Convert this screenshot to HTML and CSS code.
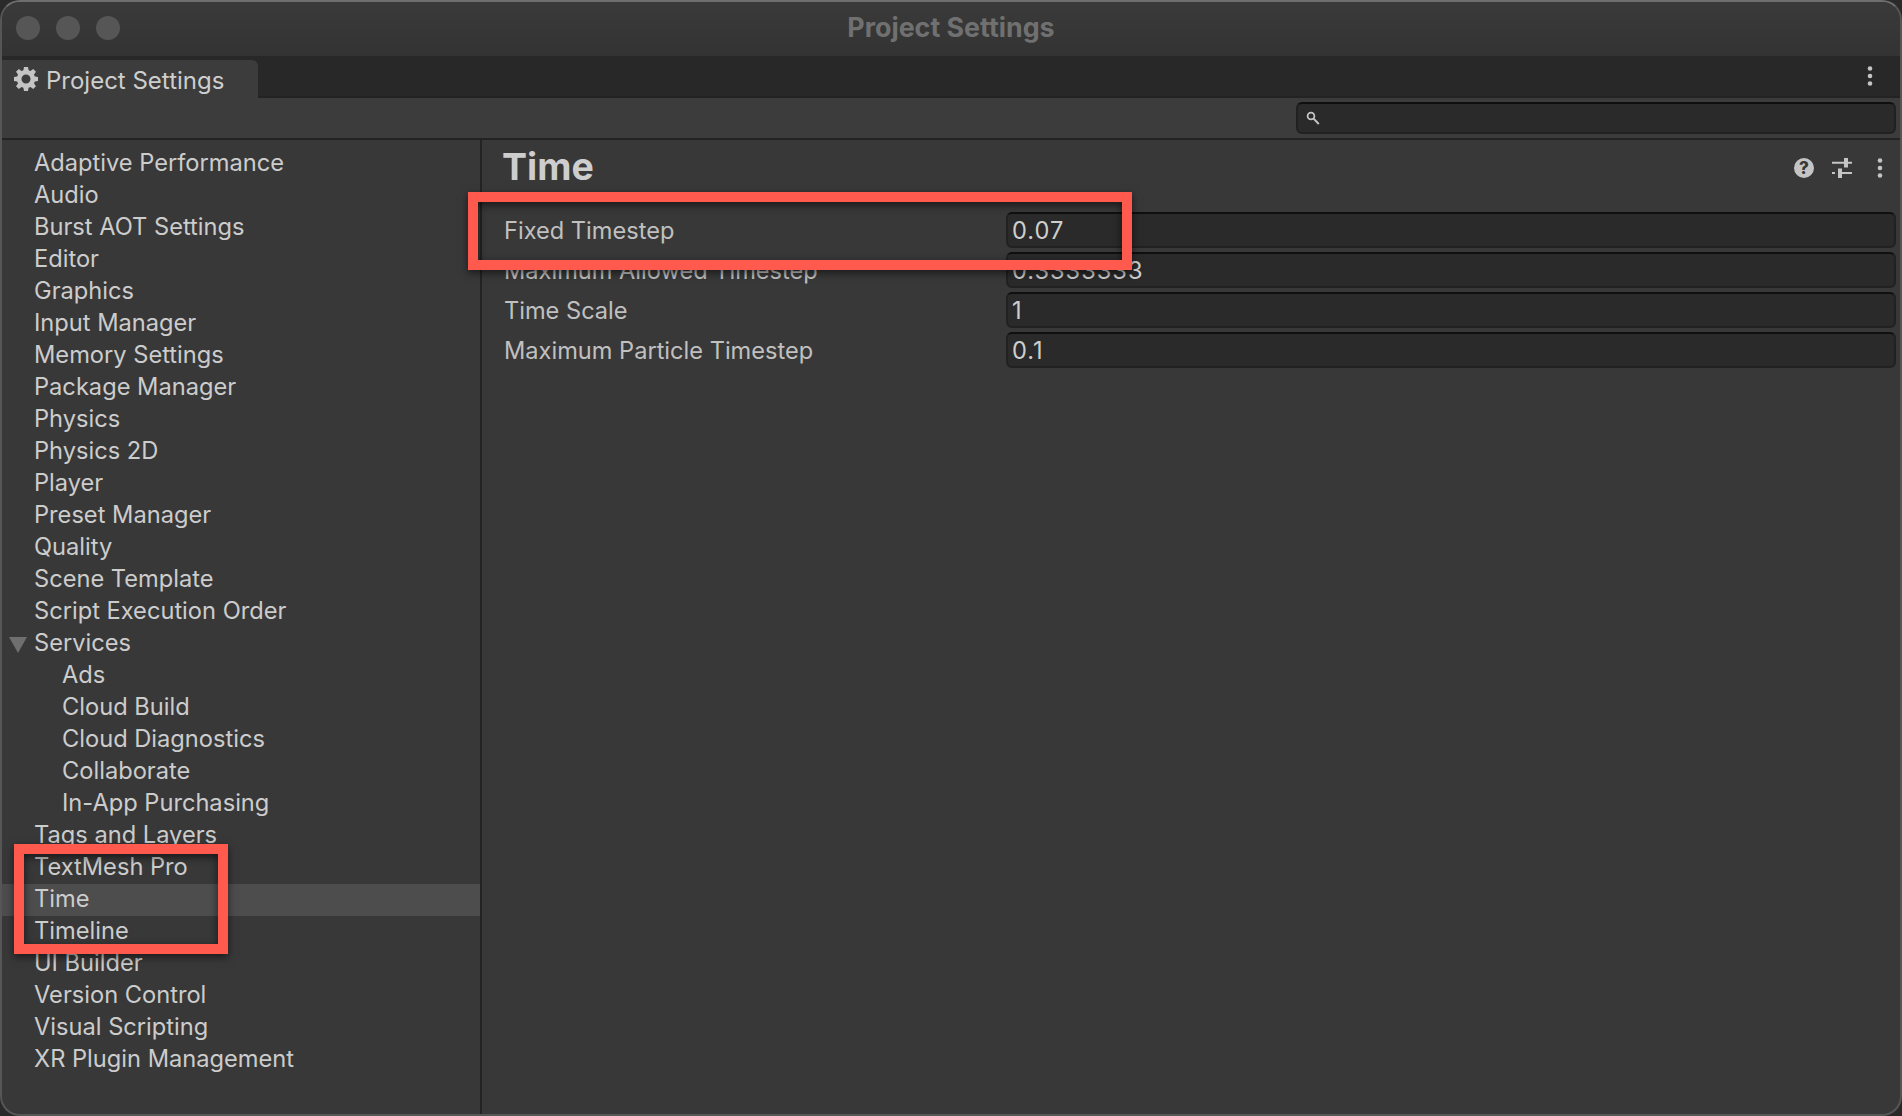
FILE: index.html
```html
<!DOCTYPE html>
<html lang="en">
<head>
<meta charset="utf-8">
<title>Project Settings</title>
<link rel="stylesheet" href="styles.css">
</head>
<body>
<div class="window">
  <header class="titlebar">
    <div class="lights"><span class="light"></span><span class="light"></span><span class="light"></span></div>
    <div class="title">Project Settings</div>
  </header>
  <div class="tabbar">
    <div class="tab">
      <svg class="gear" viewBox="0 0 24 24"><path fill="#c4c4c4" fill-rule="evenodd" d="M10 0h4l.6 3.2 1.9.8L19.2 2l2.8 2.8-2 2.7.8 1.9 3.2.6v4l-3.2.6-.8 1.9 2 2.7-2.8 2.8-2.7-2-1.9.8L14 24h-4l-.6-3.2-1.9-.8-2.7 2L2 19.2l2-2.7-.8-1.9L0 14v-4l3.2-.6.8-1.9-2-2.7L4.8 2l2.7 2 1.9-.8zM12 7.5a4.5 4.5 0 1 0 0 9 4.5 4.5 0 0 0 0-9z"/></svg>
      <span class="tablabel">Project Settings</span>
    </div>
    <svg class="dots tabdots" viewBox="0 0 6 20"><circle cx="3" cy="2.500" r="2.300"/><circle cx="3" cy="10" r="2.300"/><circle cx="3" cy="17.500" r="2.300"/></svg>
  </div>
  <div class="toolbar">
    <div class="search">
      <svg class="searchicon" viewBox="0 0 14 14"><circle cx="5" cy="5" r="3.400" fill="none" stroke="#c4c4c4" stroke-width="1.800"/><path d="M7.600 7.600l5.200 5.400" stroke="#c4c4c4" stroke-width="2" fill="none"/></svg>
    </div>
  </div>
  <main class="body">
    <nav class="sidebar">
      <div class="row">Adaptive Performance</div>
      <div class="row">Audio</div>
      <div class="row">Burst AOT Settings</div>
      <div class="row">Editor</div>
      <div class="row">Graphics</div>
      <div class="row">Input Manager</div>
      <div class="row">Memory Settings</div>
      <div class="row">Package Manager</div>
      <div class="row">Physics</div>
      <div class="row">Physics 2D</div>
      <div class="row">Player</div>
      <div class="row">Preset Manager</div>
      <div class="row">Quality</div>
      <div class="row">Scene Template</div>
      <div class="row">Script Execution Order</div>
      <div class="row"><span class="arrow"></span>Services</div>
      <div class="row sub">Ads</div>
      <div class="row sub">Cloud Build</div>
      <div class="row sub">Cloud Diagnostics</div>
      <div class="row sub">Collaborate</div>
      <div class="row sub">In-App Purchasing</div>
      <div class="row">Tags and Layers</div>
      <div class="row">TextMesh Pro</div>
      <div class="row selected">Time</div>
      <div class="row">Timeline</div>
      <div class="row">UI Builder</div>
      <div class="row">Version Control</div>
      <div class="row">Visual Scripting</div>
      <div class="row">XR Plugin Management</div>
    </nav>
    <section class="content">
      <div class="heading">
        <h1 class="h">Time</h1>
        <div class="tools">
          <svg class="tool" viewBox="0 0 20 20"><circle cx="10" cy="10" r="10" fill="#c4c4c4"/><text x="10" y="16" class="qmark">?</text></svg>
          <svg class="tool" viewBox="0 0 20 20"><path d="M0 4.700h20M0 15h3M8 15h12" stroke="#c4c4c4" stroke-width="2" fill="none"/><path d="M12 0h4v9.500h-4zM6 10.500h4V20H6z" fill="#c4c4c4"/></svg>
          <svg class="dots menu" viewBox="0 0 6 20"><circle cx="3" cy="2.500" r="2.300"/><circle cx="3" cy="10" r="2.300"/><circle cx="3" cy="17.500" r="2.300"/></svg>
        </div>
      </div>
      <div class="field"><label class="lbl">Fixed Timestep</label><div class="input">0.07</div></div>
      <div class="field"><label class="lbl">Maximum Allowed Timestep</label><div class="input">0.3333333</div></div>
      <div class="field"><label class="lbl">Time Scale</label><div class="input">1</div></div>
      <div class="field"><label class="lbl">Maximum Particle Timestep</label><div class="input">0.1</div></div>
    </section>
  </main>
  <div class="mark mark-field"></div>
  <div class="mark mark-nav"></div>
</div>
</body>
</html>
```

FILE: styles.css
```css
* { box-sizing: border-box; }
html, body { margin: 0; padding: 0; height: 100%; background: #2a2a2a; }
body { font-family: Inter, "Liberation Sans", sans-serif; overflow: hidden; }
.window {
  position: relative;
  width: 1902px;
  height: 1116px;
  display: flex;
  flex-direction: column;
  background: #383838;
  border: 2px solid #565656;
  border-top-color: #6e6e6e;
  border-radius: 20px;
  overflow: hidden;
}
.titlebar {
  position: relative;
  flex: 0 0 54px;
  display: flex;
  align-items: center;
  justify-content: center;
  background: linear-gradient(#3a3a3a, #333333);
}
.lights { position: absolute; left: 14px; top: 14px; display: flex; gap: 16px; }
.light { width: 24px; height: 24px; border-radius: 50%; background: #565656; }
.title { font-size: 26.800px; font-weight: 700; color: #707070; margin-top: -5px; }
.tabbar {
  flex: 0 0 42px;
  display: flex;
  justify-content: space-between;
  align-items: flex-start;
  background: #282828;
  box-shadow: inset 0 -2px 0 #232323;
}
.tab {
  width: 256px;
  height: 38px;
  margin-top: 4px;
  display: flex;
  align-items: center;
  gap: 8px;
  padding-left: 12px;
  background: #3c3c3c;
  border-radius: 0 6px 0 0;
  font-size: 24px;
  color: #cecece;
}
.tablabel { padding-top: 2px; }
.gear { width: 24px; height: 24px; }
.dots { width: 6px; height: 20px; fill: #c4c4c4; }
.tabdots { margin: 10px 27px 0 0; }
.toolbar {
  flex: 0 0 42px;
  display: flex;
  justify-content: flex-end;
  padding: 4px 4px 0 0;
  background: #3c3c3c;
  border-bottom: 2px solid #232323;
}
.search {
  width: 600px;
  height: 32px;
  display: flex;
  align-items: center;
  padding-left: 8px;
  background: #2a2a2a;
  border: 2px solid #212121;
  border-top-color: #0f0f0f;
  border-radius: 6px;
}
.searchicon { width: 14px; height: 14px; }
.body { flex: 1; display: flex; min-height: 0; }
.sidebar {
  flex: 0 0 480px;
  padding-top: 8px;
  border-right: 2px solid #232323;
  font-size: 23.650px;
  color: #cccccc;
}
.row {
  position: relative;
  height: 32px;
  line-height: 30px;
  padding-left: 32px;
  white-space: nowrap;
}
.row.sub { padding-left: 60px; }
.row.selected { background: #4d4d4d; }
.arrow {
  position: absolute;
  left: 7px;
  top: 9px;
  width: 0;
  height: 0;
  border-left: 9px solid transparent;
  border-right: 9px solid transparent;
  border-top: 16px solid #6f6f6f;
}
.content { flex: 1; padding: 0 4px 0 22px; }
.heading { display: flex; justify-content: space-between; align-items: flex-start; height: 72px; padding-right: 13px; }
.h { margin: 0 0 0 -2px; font-size: 37.500px; line-height: 54px; font-weight: 700; color: #cecece; }
.tools { display: flex; align-items: center; gap: 18px; margin-top: 18px; }
.tool { width: 20px; height: 20px; }
.menu { margin-left: 7px; }
.qmark { font-family: Inter, sans-serif; font-size: 17px; font-weight: 800; fill: #383838; text-anchor: middle; }
.field { display: flex; height: 36px; margin-bottom: 4px; align-items: stretch; }
.lbl { flex: 0 0 502px; line-height: 38px; font-size: 23.600px; color: #c0c0c0; white-space: nowrap; }
.input {
  flex: 1;
  padding-left: 4px;
  line-height: 34px;
  font-size: 23.600px;
  letter-spacing: 1px;
  color: #cecece;
  background: #2a2a2a;
  border: 2px solid #212121;
  border-top-color: #0f0f0f;
  border-radius: 6px;
}
.mark {
  position: absolute;
  border: 10px solid #ff5a4d;
  box-shadow: 0 3px 8px rgba(0,0,0,.55), inset 0 3px 8px rgba(0,0,0,.6);
}
.mark-field { left: 466px; top: 190px; width: 664px; height: 78px; }
.mark-nav { left: 12px; top: 842px; width: 214px; height: 110px; }
```
